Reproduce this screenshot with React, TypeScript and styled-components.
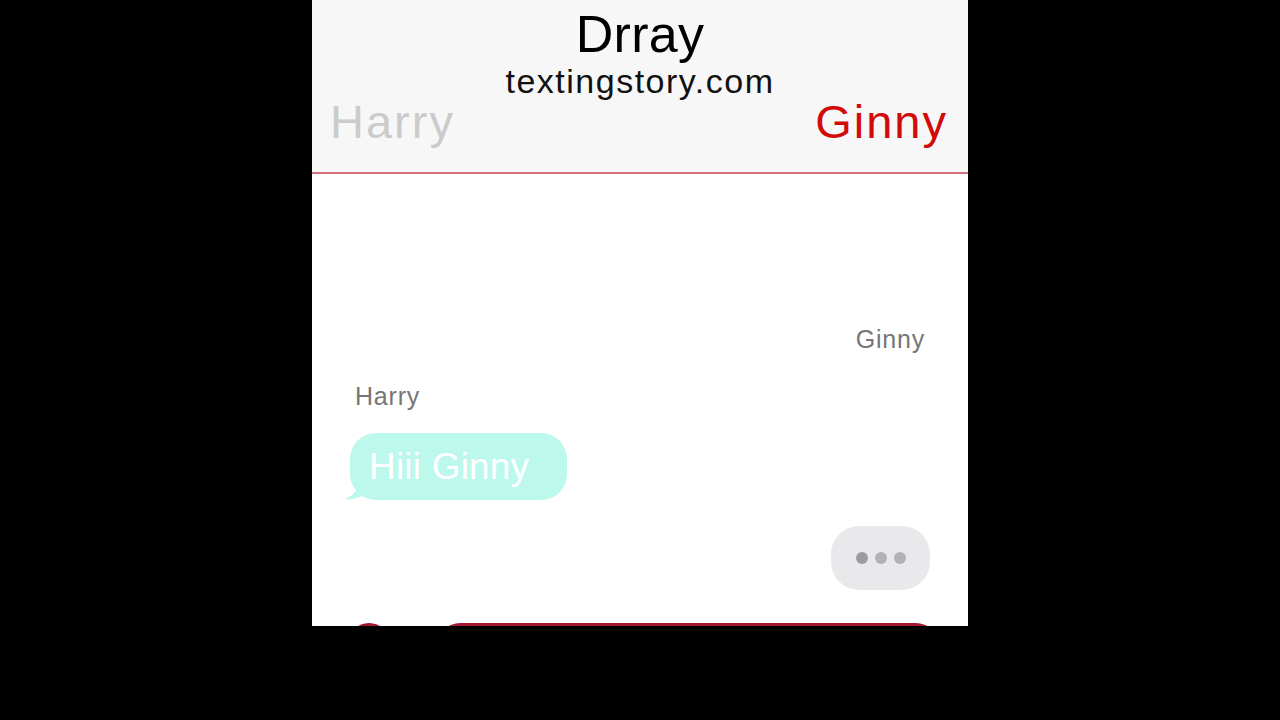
import React from 'react';
import styled, { createGlobalStyle } from 'styled-components';

const GlobalStyle = createGlobalStyle`
  html, body {
    margin: 0;
    padding: 0;
    background: #000;
  }
  body {
    font-family: "Liberation Sans", Arial, sans-serif;
  }
`;

/* PHONE FRAME */
const Screen = styled.div`
  width: 656px;
  height: 626px;
  margin: 0 auto;
  background: #ffffff;
  overflow: hidden;
  display: flex;
  flex-direction: column;
`;

/* HEADER */
const Header = styled.header`
  height: 174px;
  box-sizing: border-box;
  flex-shrink: 0;
  background: #f7f7f7;
  border-bottom: 2px solid #d8707e;
  display: flex;
  flex-direction: column;
  padding-top: 8px;
`;

const Title = styled.div`
  font-size: 52px;
  line-height: 52px;
  color: #000;
  text-align: center;
  letter-spacing: 0.3px;
`;

const Subtitle = styled.div`
  margin-top: 4px;
  font-size: 34px;
  line-height: 34px;
  color: #111;
  text-align: center;
  letter-spacing: 1.5px;
`;

const Names = styled.div`
  display: flex;
  justify-content: space-between;
  padding: 0 20px 0 18px;
`;

const HeaderName = styled.span<{ $active?: boolean }>`
  font-size: 47px;
  line-height: 47px;
  letter-spacing: 2px;
  color: ${(p) => (p.$active ? '#d20a0a' : '#cbcbcb')};
`;

/* CHAT */
const Chat = styled.main`
  flex: 1;
  display: flex;
  flex-direction: column;
`;

const Sender = styled.div<{ $right?: boolean; $gap: number }>`
  margin-top: ${(p) => p.$gap}px;
  font-size: 25px;
  line-height: 25px;
  color: #767676;
  letter-spacing: 0.8px;
  align-self: ${(p) => (p.$right ? 'flex-end' : 'flex-start')};
  margin-left: ${(p) => (p.$right ? 0 : 43)}px;
  margin-right: ${(p) => (p.$right ? 43 : 0)}px;
`;

const Bubble = styled.div`
  position: relative;
  margin-top: 24px;
  margin-left: 38px;
  align-self: flex-start;
  height: 67px;
  padding: 0 38px 0 19px;
  border-radius: 26px;
  background: #bcf8ec;
  color: #ffffff;
  font-size: 37px;
  line-height: 67px;
  letter-spacing: 0.2px;
`;

const Tail = styled.svg`
  position: absolute;
  left: -5px;
  bottom: 0;
`;

const Typing = styled.div`
  margin-top: 26px;
  margin-right: 38px;
  align-self: flex-end;
  width: 99px;
  height: 64px;
  border-radius: 28px;
  background: #e9e9eb;
  display: flex;
  align-items: center;
  justify-content: center;
  gap: 7px;
`;

const Dot = styled.span<{ $shade: string }>`
  width: 12px;
  height: 12px;
  border-radius: 50%;
  background: ${(p) => p.$shade};
`;

/* INPUT BAR (cut off at the bottom) */
const InputRow = styled.div`
  margin-top: 33px;
  display: flex;
  align-items: flex-start;
  padding-left: 36px;
  gap: 48px;
`;

const RoundButton = styled.div`
  width: 42px;
  height: 42px;
  border-radius: 50%;
  background: #a3172e;
`;

const InputField = styled.div`
  width: 500px;
  height: 44px;
  border-radius: 22px;
  background: #a3172e;
`;

const App: React.FC = () => {
  return (
    <>
      <GlobalStyle />
      <Screen>
        <Header>
          <Title>Drray</Title>
          <Subtitle>textingstory.com</Subtitle>
          <Names>
            <HeaderName>Harry</HeaderName>
            <HeaderName $active>Ginny</HeaderName>
          </Names>
        </Header>

        <Chat>
          <Sender $right $gap={153}>Ginny</Sender>
          <Sender $gap={32}>Harry</Sender>
          <Bubble>
            <Tail width="24" height="22" viewBox="0 0 24 22">
              <path d="M14 0 C14 10 10 17 0 21 C8 22 15 20 20 16 L24 0 Z" fill="#bcf8ec" />
            </Tail>
            Hiii Ginny
          </Bubble>
          <Typing>
            <Dot $shade="#9c9c9e" />
            <Dot $shade="#b2b2b4" />
            <Dot $shade="#b2b2b4" />
          </Typing>
          <InputRow>
            <RoundButton />
            <InputField />
          </InputRow>
        </Chat>
      </Screen>
    </>
  );
};

export default App;
